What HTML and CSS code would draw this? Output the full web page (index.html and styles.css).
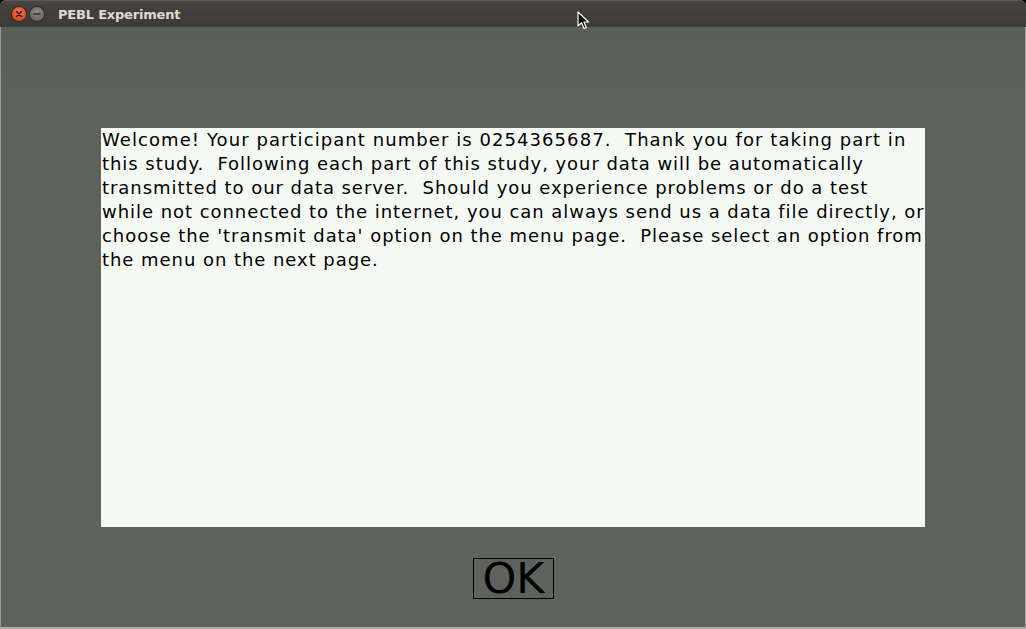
FILE: index.html
```html
<!DOCTYPE html>
<html>
<head>
<meta charset="utf-8">
<link rel="stylesheet" href="styles.css">
</head>
<body>
<div class="window">
  <div class="titlebar">
    <div class="controls">
      <span class="btn close"><svg width="14" height="14" viewBox="0 0 14 14"><path d="M4.5 4.5 L9.5 9.5 M9.5 4.5 L4.5 9.5" stroke="#3a1a10" stroke-width="1.6" stroke-linecap="round"/></svg></span>
      <span class="btn min"><svg width="14" height="14" viewBox="0 0 14 14"><path d="M4 7 L10 7" stroke="#2e2e2c" stroke-width="1.6" stroke-linecap="round"/></svg></span>
    </div>
    <div class="title">PEBL Experiment</div>
  </div>
  <div class="content">
    <div class="textbox">
      <p class="line first">Welcome! Your participant number is 0254365687.  Thank you for taking part in</p>
      <p class="line">this study.  Following each part of this study, your data will be automatically</p>
      <p class="line">transmitted to our data server.  Should you experience problems or do a test</p>
      <p class="line">while not connected to the internet, you can always send us a data file directly, or</p>
      <p class="line">choose the 'transmit data' option on the menu page.  Please select an option from</p>
      <p class="line">the menu on the next page.</p>
    </div>
    <div class="ok">OK</div>
  </div>
</div>
<svg class="cursor" width="14" height="20" viewBox="0 0 14 20"><path d="M1 1 L1 15 L4.5 11.8 L7 17.5 L9.3 16.5 L6.9 11 L11.5 11 Z" fill="#000" stroke="#fff" stroke-width="1.2" stroke-linejoin="round"/></svg>
</body>
</html>
```
FILE: styles.css
```css
html, body {
  margin: 0;
  padding: 0;
  width: 1026px;
  height: 629px;
  overflow: hidden;
  background: #000;
}
.window {
  width: 1026px;
  height: 629px;
  display: flex;
  flex-direction: column;
  border-radius: 6px 6px 0 0;
  overflow: hidden;
  background: #5e625d;
}
.titlebar {
  height: 27px;
  flex: 0 0 27px;
  background: linear-gradient(#4a4944 0px, #43423e 3px, #3c3b37 27px);
  display: flex;
  align-items: center;
  box-sizing: border-box;
  border-top: 1px solid #5a5954;
}
.controls {
  display: flex;
  gap: 4px;
  padding-left: 12px;
}
.btn {
  width: 14px;
  height: 14px;
  border-radius: 50%;
  display: block;
}
.btn svg { display: block; }
.close {
  background: radial-gradient(circle at 50% 35%, #f8744a 0%, #e8542a 55%, #c23e17 100%);
  box-shadow: 0 0 0 1px #2f2e2a;
}
.min {
  background: radial-gradient(circle at 50% 35%, #8c8b86 0%, #6f6e69 60%, #5a5955 100%);
  box-shadow: 0 0 0 1px #2f2e2a;
}
.title {
  margin-left: 14px;
  font-family: "DejaVu Sans", sans-serif;
  font-weight: bold;
  font-size: 13px;
  color: #dfdbd2;
  letter-spacing: -0.2px;
}
.content {
  flex: 1;
  display: flex;
  flex-direction: column;
  align-items: flex-start;
  padding-top: 101px;
  padding-left: 101px;
  box-sizing: border-box;
  border-left: 1px solid #9a9a94;
  border-right: 1px solid #a4a49d;
  border-bottom: 2px solid #aeaea6;
  background: linear-gradient(#5a5e5a 0px, #5e625d 70px);
}
.textbox {
  width: 824px;
  height: 399px;
  background: #f5faf5;
  margin-left: -1px;
}
.line {
  margin: 0;
  padding: 0 0 0 1px;
  font-family: "DejaVu Sans", sans-serif;
  font-size: 18px;
  line-height: 24px;
  color: #000;
  white-space: pre;
  letter-spacing: 0.95px;
}
.line.first {
  letter-spacing: 1.07px;
}
.ok {
  margin-top: 31px;
  margin-left: 371px;
  width: 79px;
  height: 39px;
  border: 1px solid #000;
  font-family: "DejaVu Sans", sans-serif;
  font-size: 43px;
  line-height: 39px;
  text-align: center;
  color: #000;
}
.cursor {
  position: absolute;
  left: 577px;
  top: 11px;
}
```
